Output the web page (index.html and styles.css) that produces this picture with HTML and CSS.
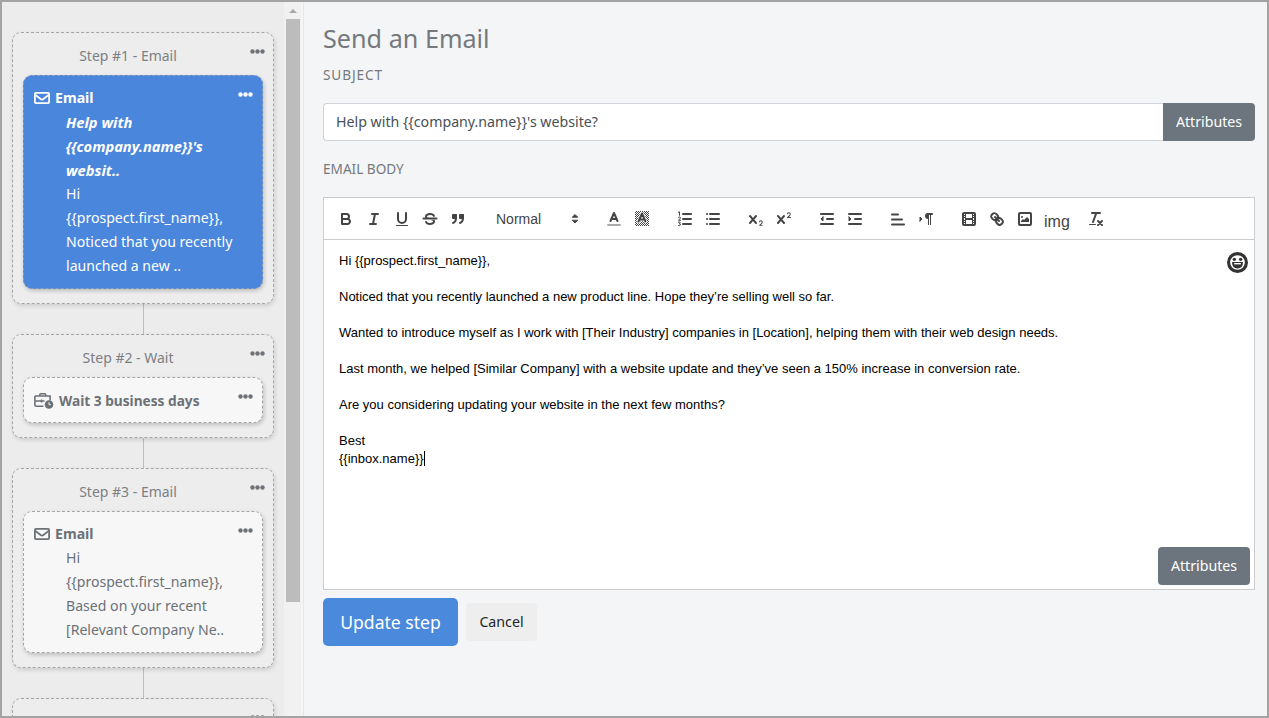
FILE: index.html
```html
<!DOCTYPE html>
<html lang="en">
<head>
<meta charset="utf-8">
<title>Send an Email</title>
<link rel="stylesheet" href="styles.css">
</head>
<body>
<svg class="defs" width="0" height="0" aria-hidden="true">
  <defs>
    <pattern id="hatch" width="2" height="2" patternUnits="userSpaceOnUse"><rect width="1" height="1" fill="#444"/><rect x="1" y="1" width="1" height="1" fill="#444"/></pattern>
    <symbol id="dots" viewBox="0 0 15 5"><circle cx="2.5" cy="2.5" r="2.2"/><circle cx="7.5" cy="2.5" r="2.2"/><circle cx="12.5" cy="2.5" r="2.2"/></symbol>
    <symbol id="env" viewBox="0 0 16 12"><rect x=".9" y=".9" width="14.2" height="10.2" rx="1" fill="none" stroke="currentColor" stroke-width="1.8"/><path d="M1 2.600 6.600 7q1.400 1 2.800 0L15 2.600" fill="none" stroke="currentColor" stroke-width="1.8"/></symbol>
  </defs>
</svg>
<div class="frame">
  <aside class="sidebar">
    <section class="step">
      <h3 class="step-title">Step #1 - Email</h3>
      <svg class="dots step-dots"><use href="#dots"/></svg>
      <div class="card card-active">
        <svg class="dots card-dots"><use href="#dots"/></svg>
        <div class="card-head"><svg class="ico-env"><use href="#env"/></svg><span>Email</span></div>
        <div class="card-body">
          <div class="subject">Help with</div>
          <div class="subject">{{company.name}}'s</div>
          <div class="subject">websit..</div>
          <div>Hi</div>
          <div>{{prospect.first_name}},</div>
          <div>Noticed that you recently</div>
          <div>launched a new ..</div>
        </div>
      </div>
    </section>
    <div class="connector"></div>
    <section class="step">
      <h3 class="step-title">Step #2 - Wait</h3>
      <svg class="dots step-dots"><use href="#dots"/></svg>
      <div class="card card-wait">
        <svg class="dots card-dots"><use href="#dots"/></svg>
        <div class="card-head">
          <svg class="ico-wait" viewBox="0 0 20 16"><path d="M5.800 3V1.700q0-.9.9-.9h4.100q.9 0 .9.900V3M.9 3H16.100V7.500M9.500 13.200H2q-1.100 0-1.100-1.100V3M1 8H10.500M7.500 6.500V9.500" fill="none" stroke="currentColor" stroke-width="1.600"/><circle cx="15" cy="11.500" r="4.300" fill="currentColor"/><path d="M15 9.300V11.700H16.800" fill="none" stroke="#f7f7f8" stroke-width="1"/></svg>
          <span class="wait-text">Wait 3 business days</span>
        </div>
      </div>
    </section>
    <div class="connector"></div>
    <section class="step">
      <h3 class="step-title">Step #3 - Email</h3>
      <svg class="dots step-dots"><use href="#dots"/></svg>
      <div class="card">
        <svg class="dots card-dots"><use href="#dots"/></svg>
        <div class="card-head"><svg class="ico-env"><use href="#env"/></svg><span>Email</span></div>
        <div class="card-body">
          <div>Hi</div>
          <div>{{prospect.first_name}},</div>
          <div>Based on your recent</div>
          <div>[Relevant Company Ne..</div>
        </div>
      </div>
    </section>
    <div class="connector"></div>
    <section class="step">
      <h3 class="step-title">Step #4 - Wait</h3>
      <svg class="dots step-dots"><use href="#dots"/></svg>
    </section>
  </aside>
  <div class="scrollbar">
    <div class="scroll-btn"><span class="scroll-arrow"></span></div>
    <div class="scroll-thumb"></div>
  </div>
  <main class="main">
    <h1 class="page-title">Send an Email</h1>
    <label class="field-label field-label-subject">SUBJECT</label>
    <div class="input-group">
      <div class="text-input">Help with {{company.name}}'s website?</div>
      <button class="btn-attr btn-attr-joined">Attributes</button>
    </div>
    <label class="field-label field-label-body">EMAIL BODY</label>
    <div class="editor">
      <div class="toolbar">
        <div class="tb-group">
          <span class="tb-btn"><svg viewBox="0 0 18 18"><path d="M5 4H9.500A2.500 2.500 0 0 1 12 6.500v0A2.500 2.500 0 0 1 9.500 9H5V4Z"/><path d="M5 9h5.500A2.500 2.500 0 0 1 13 11.500v0A2.500 2.500 0 0 1 10.500 14H5V9Z"/></svg></span>
          <span class="tb-btn"><svg viewBox="0 0 18 18"><path d="M7 4H13M5 14H11M8 14 10 4"/></svg></span>
          <span class="tb-btn"><svg viewBox="0 0 18 18"><path d="M5 3V9a4 4 0 0 0 4 4h0a4 4 0 0 0 4-4V3"/><rect class="f" x="3" y="15" width="12" height="1" rx=".5"/></svg></span>
          <span class="tb-btn"><svg viewBox="0 0 18 18"><path d="M15.500 8.500H2.500"/><path class="f" d="M9 8C6.500 7.800 6 7.500 6 6.500 6 5.800 7.300 5 9 5c1.600 0 2.800.7 3 1.300a1 1 0 0 0 1.900-.6C13.400 4.100 11.400 3 9 3 6.200 3 4 4.500 4 6.500a3.200 3.200 0 0 0 .5 1.800Z"/><path class="f" d="M9 10c2.500.2 3 .5 3 1.500 0 .7-1.300 1.500-3 1.500-1.600 0-2.800-.7-3-1.300a1 1 0 1 0-1.900.6C4.600 13.900 6.600 15 9 15c2.800 0 5-1.500 5-3.500a3.200 3.200 0 0 0-.5-1.800Z"/></svg></span>
          <span class="tb-btn"><svg viewBox="0 0 18 18"><rect class="f" x="4" y="5" width="3" height="3"/><rect class="f" x="11" y="5" width="3" height="3"/><path d="M7 5v3c0 4-3 5-3 5M14 5v3c0 4-3 5-3 5"/><rect x="4" y="5" width="3" height="3"/><rect x="11" y="5" width="3" height="3"/></svg></span>
        </div>
        <div class="tb-picker"><span>Normal</span><svg viewBox="0 0 18 18"><polygon class="fs" points="6.500 10.500 9 13 11.500 10.500"/><polygon class="fs" points="6.500 7 9 4.500 11.500 7"/></svg></div>
        <div class="tb-group">
          <span class="tb-btn"><svg viewBox="0 0 18 18"><path class="thin-label" d="M3 15H15"/><path d="M5.500 11 9 3 12.500 11M11.630 9H6.380"/></svg></span>
          <span class="tb-btn"><svg viewBox="0 0 18 18"><rect x="2" y="1" width="14" height="15" fill="url(#hatch)" stroke="none"/><path class="halo" d="M5.500 11.500 9 3.500 12.500 11.500M11.630 9.500H6.380"/><path d="M5.500 11.500 9 3.500 12.500 11.500M11.630 9.500H6.380"/></svg></span>
        </div>
        <div class="tb-group">
          <span class="tb-btn"><svg viewBox="0 0 18 18"><path d="M7 4H15M7 9H15M7 14H15"/><path class="hair" d="M2.500 2.300 3.500 1.800V5.300M2.500 7.300Q4.500 6.300 4.500 7.600 4.300 8.800 2.500 10.300H4.600M2.500 12Q4.600 11.600 4.300 12.900 4 13.700 3.200 13.700 4.700 13.800 4.400 15 4 16 2.500 15.600"/></svg></span>
          <span class="tb-btn"><svg viewBox="0 0 18 18"><path d="M6 4H15M6 9H15M6 14H15M3 4h.01M3 9h.01M3 14h.01"/></svg></span>
        </div>
        <div class="tb-group">
          <span class="tb-btn"><svg viewBox="0 0 18 18"><path class="f" d="M15.500 15H13.860a3.860 3.860 0 0 0 1.910-2.980 1.800 1.800 0 0 0-1.600-1.750A1.920 1.920 0 0 0 12.020 11.700a.5.500 0 1 0 .96.290.91.91 0 0 1 1.050-.72.81.81 0 0 1 .74.760c0 1.080-1.170 1.860-1.940 2.370-.19.130-.37.250-.51.360a.5.500 0 0 0 .31.890H15.500A.5.5 0 0 0 15.500 15Z"/><path class="f" d="M9.650 5.240a1 1 0 0 0-1.410.11L6 7.960 3.760 5.350A1 1 0 0 0 2.240 6.650L4.680 9.500 2.240 12.350a1 1 0 1 0 1.520 1.300L6 11.040l2.240 2.610A1 1 0 0 0 9.760 12.350L7.320 9.500 9.760 6.650A1 1 0 0 0 9.650 5.240Z"/></svg></span>
          <span class="tb-btn"><svg viewBox="0 0 18 18"><path class="f" d="M15.500 7H13.860a4 4 0 0 0 1.910-2.980 1.800 1.800 0 0 0-1.600-1.750A1.920 1.920 0 0 0 12.020 3.700a.5.500 0 1 0 .96.290.92.92 0 0 1 1.050-.72.81.81 0 0 1 .74.760c0 1.080-1.160 1.920-1.930 2.490A1.420 1.420 0 0 0 12 7.500a.5.500 0 0 0 .5.500h3A.5.500 0 0 0 15.500 7Z"/><path class="f" d="M9.650 5.240a1 1 0 0 0-1.410.11L6 7.960 3.760 5.350A1 1 0 0 0 2.240 6.650L4.680 9.500 2.240 12.350a1 1 0 1 0 1.520 1.300L6 11.040l2.240 2.610A1 1 0 0 0 9.760 12.350L7.320 9.500 9.760 6.650A1 1 0 0 0 9.650 5.240Z"/></svg></span>
        </div>
        <div class="tb-group">
          <span class="tb-btn"><svg viewBox="0 0 18 18"><path d="M3 14H15M3 4H15M9 9H15"/><polygon class="fs" points="5 7 5 11 3 9 5 7"/></svg></span>
          <span class="tb-btn"><svg viewBox="0 0 18 18"><path d="M3 14H15M3 4H15M9 9H15"/><polygon class="fs" points="3 7 3 11 5 9 3 7"/></svg></span>
        </div>
        <div class="tb-group">
          <span class="tb-btn"><svg viewBox="0 0 18 18"><path d="M3 14H15M3 9H13M3 4H9" transform="translate(0 .5)"/></svg></span>
          <span class="tb-btn"><svg viewBox="0 0 18 18"><polygon class="fs" points="3 11 5 9 3 7 3 11"/><path d="M15 4H11"/><path class="f" d="M11 3a3 3 0 0 0 0 6h1V3H11Z"/><rect class="f" x="11" y="4" width="1" height="11"/><rect class="f" x="13" y="4" width="1" height="11"/></svg></span>
        </div>
        <div class="tb-group">
          <span class="tb-btn"><svg viewBox="0 0 18 18"><rect x="3" y="3" width="12" height="12" rx="1"/><rect class="f" x="5" y="3" width="1" height="12"/><rect class="f" x="12" y="3" width="1" height="12"/><rect class="f" x="5" y="8" width="8" height="2"/><rect class="f" x="3" y="5" width="3" height="1"/><rect class="f" x="3" y="7" width="3" height="1"/><rect class="f" x="3" y="10" width="3" height="1"/><rect class="f" x="3" y="12" width="3" height="1"/><rect class="f" x="12" y="5" width="3" height="1"/><rect class="f" x="12" y="7" width="3" height="1"/><rect class="f" x="12" y="10" width="3" height="1"/><rect class="f" x="12" y="12" width="3" height="1"/></svg></span>
          <span class="tb-btn"><svg viewBox="0 0 18 18"><path d="M7 7 11 11"/><path d="M8.900 4.580a3.480 3.480 0 0 1 .36 4.680A3.480 3.480 0 0 1 4.580 8.900C3.190 7.500 2.040 6.400 4.220 4.220S7.500 3.190 8.900 4.580Z"/><path d="M13.420 9.100a3.480 3.480 0 0 0-4.680-.36 3.480 3.480 0 0 0 .36 4.680c1.390 1.390 2.500 2.540 4.680.36S14.820 10.500 13.420 9.100Z"/></svg></span>
          <span class="tb-btn"><svg viewBox="0 0 18 18"><rect x="3" y="3" width="12" height="12" rx="1"/><circle class="f" cx="6" cy="7" r="1"/><polygon class="f" points="5 12 5 11 7 9 8 10 11 7 13 9 13 12 5 12"/></svg></span>
          <span class="tb-btn tb-text">img</span>
        </div>
        <div class="tb-group">
          <span class="tb-btn"><svg viewBox="0 0 18 18"><path class="thin" d="M5 3H13M6 12 9.350 3"/><path d="M11 11 15 15M15 11 11 15"/><rect class="f" x="2" y="14" width="7" height="1" rx=".5"/></svg></span>
        </div>
      </div>
      <div class="editor-body">
        <svg class="smiley" viewBox="0 0 20 20"><circle cx="10" cy="10" r="8.500" fill="#fff" stroke="#333" stroke-width="3"/><circle cx="7" cy="7" r="1.600" fill="#333"/><circle cx="13" cy="7" r="1.600" fill="#333"/><path d="M4.800 9.500h10.400q0 6.200-5.200 6.200T4.800 9.500Z" fill="#333"/><path d="M6.800 10.500h6.400v1.300H6.800Z" fill="#fff"/></svg>
        <p>Hi {{prospect.first_name}},</p>
        <p class="blank">&nbsp;</p>
        <p>Noticed that you recently launched a new product line. Hope they’re selling well so far.</p>
        <p class="blank">&nbsp;</p>
        <p>Wanted to introduce myself as I work with [Their Industry] companies in [Location], helping them with their web design needs.</p>
        <p class="blank">&nbsp;</p>
        <p>Last month, we helped [Similar Company] with a website update and they’ve seen a 150% increase in conversion rate.</p>
        <p class="blank">&nbsp;</p>
        <p>Are you considering updating your website in the next few months?</p>
        <p class="blank">&nbsp;</p>
        <p>Best</p>
        <p>{{inbox.name}}<span class="caret"></span></p>
        <button class="btn-attr btn-attr-float">Attributes</button>
      </div>
    </div>
    <div class="actions">
      <button class="btn-primary">Update step</button>
      <button class="btn-cancel">Cancel</button>
    </div>
  </main>
</div>
</body>
</html>
```
FILE: styles.css
```css
* { box-sizing: border-box; }
html, body { margin: 0; height: 100%; }
body { font-family: "Noto Sans", "Open Sans", sans-serif; background: #f4f5f7; overflow: hidden; }
.defs { position: absolute; }
.frame { display: flex; width: 1269px; height: 718px; border: 2px solid #a3a3a3; background: #f4f5f7; overflow: hidden; }

.sidebar { width: 282px; flex: none; height: 100%; background: #ececec; padding: 30px 10px 0; overflow: hidden; }
.step { position: relative; width: 262px; flex: none; border: 1px dashed #a5a5a5; border-radius: 9px; padding: 11px 10px 14px; box-shadow: 1px 2px 4px rgba(0,0,0,.13); background: #ededed; }
.step-title { margin: 0 0 7px; padding-right: 30px; font-weight: 400; font-size: 14px; line-height: 24px; text-align: center; color: #7b7f84; }
.connector { width: 1px; height: 30px; margin-left: 131px; background: #bdbdbd; }
.dots { position: absolute; width: 15px; height: 5px; fill: #6f7378; }
.step-dots { top: 16px; right: 8px; }
.card { position: relative; border: 1px dashed #a5a5a5; border-radius: 9px; background: #f7f7f8; padding: 10px; box-shadow: 1px 2px 4px rgba(0,0,0,.2); color: #6c7176; font-size: 14.1px; line-height: 24px; }
.card-wait { padding: 11px 10px 9px; }
.card-dots { top: 16px; right: 9px; }
.card-active { background: #4a86db; border-color: #8d9fb8; color: #fff; }
.card-active .dots { fill: #fff; }
.card-head { display: flex; align-items: center; font-weight: 700; height: 24px; }
.ico-env { width: 16px; height: 12px; margin-right: 5px; color: inherit; flex: none; }
.ico-wait { width: 20px; height: 16px; margin-right: 5px; flex: none; }
.wait-text { font-size: 13.700px; }
.card-body { padding-left: 32px; white-space: nowrap; }
.subject { font-weight: 700; font-style: italic; font-size: 14.700px; }

.scrollbar { width: 17px; flex: none; height: 100%; background: #f1f1f1; padding: 0 1px 0 2px; margin-right: 2px; }
.scroll-btn { height: 17px; display: flex; align-items: center; justify-content: center; }
.scroll-arrow { width: 0; height: 0; border-left: 4px solid transparent; border-right: 4px solid transparent; border-bottom: 4px solid #a8a8a8; }
.scroll-thumb { height: 583px; background: #bcbcbc; }

.main { flex: 1; min-width: 0; border-left: 1px solid #e6e7e9; padding: 19px 12px 0 19px; background: #f4f5f7; }
.page-title { margin: 0 0 8px; font-weight: 400; font-size: 25.200px; line-height: 34px; color: #75797d; }
.field-label { display: block; font-size: 13.600px; line-height: 24px; color: #75797d; margin-bottom: 16px; }
.field-label-subject { letter-spacing: .9px; }
.field-label-body { margin-top: 16px; }
.input-group { display: flex; height: 38px; }
.text-input { flex: 1; border: 1px solid #ced4da; border-right: 0; border-radius: 4px 0 0 4px; background: #fff; padding: 0 12px; font-size: 14.200px; line-height: 36px; color: #495057; }
.btn-attr { width: 92px; height: 38px; border: 0; border-radius: 4px; background: #6c757d; color: #fff; font: 400 14.200px/38px "Noto Sans", "Open Sans", sans-serif; padding: 0; }
.btn-attr-joined { border-radius: 0 4px 4px 0; }
.btn-attr-float { position: absolute; right: 4px; bottom: 4px; }

.editor { height: 393px; border: 1px solid #ccc; background: #fff; display: flex; flex-direction: column; }
.toolbar { display: flex; gap: 15px; height: 42px; flex: none; padding: 9px 8px 7px; border-bottom: 1px solid #ccc; }
.tb-group { display: flex; }
.tb-btn { width: 28px; height: 24px; padding: 3px 5px; flex: none; }
.tb-btn svg, .tb-picker svg { display: block; width: 18px; height: 18px; fill: none; stroke: #444; stroke-width: 2; stroke-linecap: round; stroke-linejoin: round; }
.tb-btn svg .f { fill: #444; stroke: none; }
.tb-btn svg .fs, .tb-picker svg .fs { fill: #444; stroke: #444; stroke-width: 1; }
.tb-btn svg .hair { stroke-width: 1; }
.tb-btn svg .thin { stroke-width: 2; }
.tb-btn svg .thin-label { stroke: #aaa; }
.tb-btn svg .halo { stroke: #fff; stroke-width: 3.500; }
.tb-text { font: 16px/24px "Liberation Sans", Arial, sans-serif; color: #444; white-space: nowrap; }
.tb-picker { width: 98px; height: 24px; display: flex; align-items: center; justify-content: space-between; padding-left: 9px; padding-right: 1px; font: 14px/24px "Liberation Sans", Arial, sans-serif; color: #444; }

.editor-body { position: relative; flex: 1; padding: 12px 15px; font: 13px/18px "Liberation Sans", Arial, sans-serif; color: #000; }
.editor-body p { margin: 0; }
.caret { display: inline-block; width: 1px; height: 15px; background: #000; vertical-align: -3px; }
.smiley { position: absolute; top: 12px; right: 6px; width: 21px; height: 21px; }

.actions { display: flex; align-items: center; gap: 8px; margin-top: 8px; }
.btn-primary { width: 135px; height: 48px; border: 0; border-radius: 5px; background: #4a89dc; color: #fff; font: 400 17.600px/48px "Noto Sans", "Open Sans", sans-serif; padding: 0; }
.btn-cancel { width: 71px; height: 38px; border: 0; border-radius: 4px; background: #eeeeee; color: #212529; font: 400 14.200px/38px "Noto Sans", "Open Sans", sans-serif; padding: 0; }
```
